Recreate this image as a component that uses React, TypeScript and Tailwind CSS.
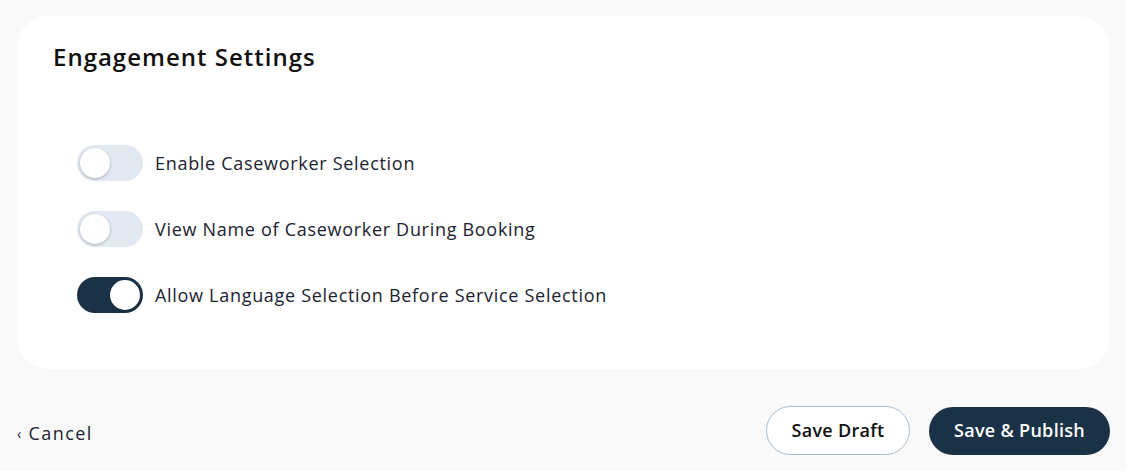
import { useState } from 'react'

const font = { fontFamily: '"Open Sans", "Noto Sans", sans-serif' }

function Toggle({ on, onClick }: { on: boolean; onClick: () => void }) {
  return (
    <button
      onClick={onClick}
      className={`relative h-[36px] w-[66px] shrink-0 rounded-full transition-colors ${on ? 'bg-[#1b3246]' : 'bg-[#e3e9f1]'}`}
    >
      <span
        className={`absolute top-[3px] h-[30px] w-[30px] rounded-full bg-white shadow-[0_1px_3px_rgba(0,0,0,0.25)] transition-all ${on ? 'left-[33px]' : 'left-[3px]'}`}
      />
    </button>
  )
}

export default function App() {
  const [settings, setSettings] = useState([
    { label: 'Enable Caseworker Selection', on: false },
    { label: 'View Name of Caseworker During Booking', on: false },
    { label: 'Allow Language Selection Before Service Selection', on: true },
  ])

  const flip = (i: number) =>
    setSettings(s => s.map((x, j) => (j === i ? { ...x, on: !x.on } : x)))

  return (
    <div className="min-h-[471px] w-full bg-[#f9f9f9] pl-[17px] pr-[16px] pt-[16px] text-[#1b2533]" style={font}>
      <section className="h-[353px] rounded-[32px] bg-white px-[36px] pt-[25px]">
        <h2 className="text-[24px] font-semibold leading-[32px] tracking-[1px] text-[#111]">Engagement Settings</h2>
        <div className="mt-[72px] flex flex-col gap-[30px] pl-[24px]">
          {settings.map((s, i) => (
            <div key={s.label} className="flex items-center gap-[12px]">
              <Toggle on={s.on} onClick={() => flip(i)} />
              <span className="text-[18px] tracking-[0.7px] text-[#1c2230]">{s.label}</span>
            </div>
          ))}
        </div>
      </section>

      <div className="mt-[37px] flex items-center justify-between">
        <button className="mt-[6px] flex items-center gap-[6px] text-[18px] tracking-[1.4px] text-[#1c2230]">
          <span className="text-[14px]">‹</span>Cancel
        </button>
        <div className="flex items-center gap-[19px]">
          <button className="h-[49px] w-[144px] rounded-full border border-[#a9bccb] bg-white text-[18px] font-semibold tracking-[0.3px] text-[#111]">
            Save Draft
          </button>
          <button className="h-[48px] w-[181px] rounded-full bg-[#1b3246] text-[18px] font-semibold tracking-[0.3px] text-white">
            Save &amp; Publish
          </button>
        </div>
      </div>
    </div>
  )
}
